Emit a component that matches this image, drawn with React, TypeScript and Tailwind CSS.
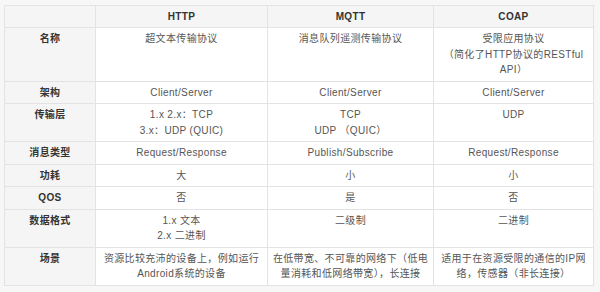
import React from "react";

const rows: { label: string; cells: React.ReactNode[][] }[] = [
  { label: "名称", cells: [["超文本传输协议"], ["消息队列遥测传输协议"], ["受限应用协议", "（简化了HTTP协议的RESTful", "API）"]] },
  { label: "架构", cells: [["Client/Server"], ["Client/Server"], ["Client/Server"]] },
  { label: "传输层", cells: [["1.x 2.x：TCP", "3.x：UDP (QUIC)"], ["TCP", "UDP （QUIC）"], ["UDP"]] },
  { label: "消息类型", cells: [["Request/Response"], ["Publish/Subscribe"], ["Request/Response"]] },
  { label: "功耗", cells: [["大"], ["小"], ["小"]] },
  { label: "QOS", cells: [["否"], ["是"], ["否"]] },
  { label: "数据格式", cells: [["1.x 文本", "2.x 二进制"], ["二级制"], ["二进制"]] },
  {
    label: "场景",
    cells: [
      ["资源比较充沛的设备上，例如运行", "Android系统的设备"],
      ["在低带宽、不可靠的网络下（低电", "量消耗和低网络带宽），长连接"],
      ["适用于在资源受限的通信的IP网", "络，传感器（非长连接）"],
    ],
  },
];

export default function App() {
  return (
    <div
      className="w-[600px] h-[292px] bg-[#f7f7f7] pl-[4px] pt-[5px] overflow-hidden"
      style={{ fontFamily: '"Liberation Sans", "Noto Sans CJK SC", sans-serif' }}
    >
      <table className="border-collapse table-fixed w-[589px] text-[10px] leading-[15.5px] tracking-[0.35px]">
        <colgroup>
          <col className="w-[91px]" />
          <col className="w-[172px]" />
          <col className="w-[166px]" />
          <col className="w-[160px]" />
        </colgroup>
        <thead>
          <tr className="bg-[#f5f5f5]">
            <th className="border border-[#e3e3e3] h-[22px] p-0"></th>
            {["HTTP", "MQTT", "COAP"].map((h) => (
              <th key={h} className="border border-[#e3e3e3] h-[22px] p-0 font-semibold text-[#333] text-center align-middle">
                {h}
              </th>
            ))}
          </tr>
        </thead>
        <tbody>
          {rows.map((r) => (
            <tr key={r.label}>
              <td className="border border-[#e3e3e3] bg-[#f5f5f5] align-top text-center font-semibold text-[#333] pt-[3px] pb-[3px] px-0">
                <div className="h-[15.5px] overflow-visible">{r.label}</div>
              </td>
              {r.cells.map((lines, i) => (
                <td key={i} className="border border-[#e3e3e3] bg-white align-top text-center text-[#555] pt-[3px] pb-[3px] px-0 whitespace-nowrap">
                  {lines.map((l, j) => (
                    <div key={j} className="h-[15.5px] overflow-visible">
                      {l}
                    </div>
                  ))}
                </td>
              ))}
            </tr>
          ))}
        </tbody>
      </table>
    </div>
  );
}
